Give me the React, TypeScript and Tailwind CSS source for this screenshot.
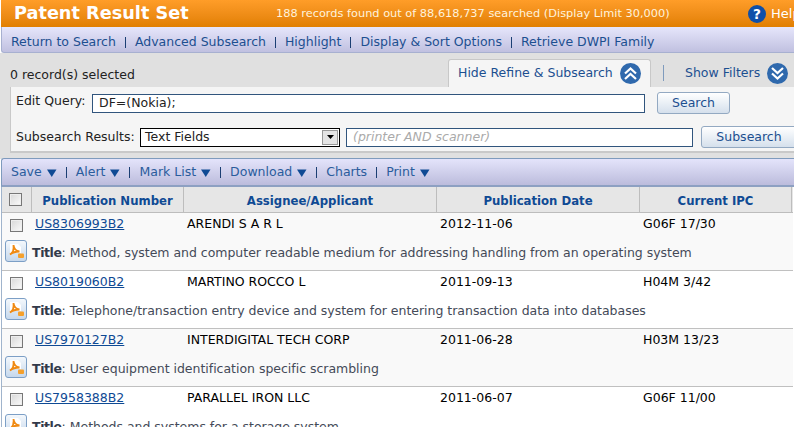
const font = "[font-family:'DejaVu_Sans',Verdana,sans-serif]";

const records = [
  { num: 'US8306993B2', who: 'ARENDI S A R L', date: '2012-11-06', ipc: 'G06F 17/30', title: 'Method, system and computer readable medium for addressing handling from an operating system', bg: 'bg-[#f9f9f9]' },
  { num: 'US8019060B2', who: 'MARTINO ROCCO L', date: '2011-09-13', ipc: 'H04M 3/42', title: 'Telephone/transaction entry device and system for entering transaction data into databases', bg: 'bg-white' },
  { num: 'US7970127B2', who: 'INTERDIGITAL TECH CORP', date: '2011-06-28', ipc: 'H03M 13/23', title: 'User equipment identification specific scrambling', bg: 'bg-[#f9f9f9]' },
  { num: 'US7958388B2', who: 'PARALLEL IRON LLC', date: '2011-06-07', ipc: 'G06F 11/00', title: 'Methods and systems for a storage system', bg: 'bg-white' },
];

function NavSep() {
  return <span className="mx-[9px] inline-block h-[11px] w-px bg-[#1b3f73]" />;
}

function Caret() {
  return (
    <svg width="10" height="8" viewBox="0 0 10 8" className="ml-[5px] inline-block">
      <path d="M0 0.5h9.5L4.75 8z" fill="#0f4a94" />
    </svg>
  );
}

function Check() {
  return <span className="block h-[13px] w-[13px] border border-[#777] bg-gradient-to-br from-[#d8d8d8] to-[#fbfbfb] shadow-[inset_0_0_0_1px_#eee]" />;
}

function Chevrons({ up }: { up?: boolean }) {
  return (
    <svg width="21" height="21" viewBox="0 0 21 21" className="ml-[7px] shrink-0">
      <circle cx="10.5" cy="10.5" r="10.5" fill="#2f69ad" />
      <g fill="none" stroke="#fff" strokeWidth="2.2" transform={up ? undefined : 'rotate(180 10.5 10.5)'}>
        <path d="M5 10.5l5.5-5 5.5 5" />
        <path d="M5 16l5.5-5 5.5 5" />
      </g>
    </svg>
  );
}

function PdfIcon() {
  return (
    <span className="flex h-[22px] w-[22px] shrink-0 items-center justify-center rounded-[3px] border border-[#7c9fc6] bg-gradient-to-b from-[#f4f8fc] to-[#c6d8ec]">
      <svg width="16" height="16" viewBox="0 0 16 16">
        <path d="M2 1h8l3 3v6H2z" fill="#fff" />
        <path d="M2 11.500c3-1.500 4-5 3.500-9.500 .5 4 2.500 6 6 6.500-3 0-6.500 .500-9.500 3z" fill="none" stroke="#f08a12" strokeWidth="1.800" />
        <rect x="10" y="10.500" width="6" height="4.500" rx="1" fill="#f5a02c" />
      </svg>
    </span>
  );
}

function ColHead({ label, className }: { label: string; className: string }) {
  return (
    <div className={`flex items-center justify-center border-r border-[#bdbdbd] pt-[5px] font-bold text-[#0f4a94] ${className}`}>
      {label}
    </div>
  );
}

export default function App() {
  return (
    <div className={`h-[427px] w-[794px] overflow-hidden bg-white text-[12.5px] leading-none ${font}`}>
      <header className="ml-px flex h-[27px] w-[820px] items-center bg-gradient-to-b from-[#ff9d28] to-[#e17f00] text-white">
        <h1 className="ml-[13px] w-[262px] text-[17.7px] font-bold">Patent Result Set</h1>
        <span className="w-[472px] text-[11.35px] text-[#fff3dd]">188 records found out of 88,618,737 searched (Display Limit 30,000)</span>
        <svg width="18" height="18" viewBox="0 0 17 17" className="shrink-0">
          <circle cx="8.5" cy="8.5" r="8.5" fill="#0f4fa8" />
          <text x="8.5" y="13" textAnchor="middle" fontSize="13" fontWeight="bold" fill="#fff" fontFamily="DejaVu Sans">?</text>
        </svg>
        <span className="ml-[5px] text-[13px]">Help</span>
      </header>

      <nav className="ml-px flex h-[26px] w-[820px] items-center rounded-bl-[3px] border-b border-l border-[#a7b0d0] bg-gradient-to-b from-[#e6e6fb] to-[#c0c0e0] pl-[9px] pt-[5px] text-[#1c4f90]">
        <span>Return to Search</span><NavSep />
        <span>Advanced Subsearch</span><NavSep />
        <span>Highlight</span><NavSep />
        <span>Display &amp; Sort Options</span><NavSep />
        <span>Retrieve DWPI Family</span>
      </nav>

      <div className="h-[106px] bg-[#e0e0e0] pt-[6px]">
        <div className="flex h-[28px] items-center pl-[10px] text-[#222]">
          <span className="w-[438px] pt-[4px]">0 record(s) selected</span>
          <div className="flex h-[28px] w-[203px] items-center rounded-t-[3px] border border-b-0 border-[#c8c8c8] bg-[#f5f5f5] pl-[9px] text-[#1c4f90]">
            Hide Refine &amp; Subsearch
            <Chevrons up />
          </div>
          <span className="ml-[12px] h-[16px] w-px bg-[#7f9bbd]" />
          <span className="ml-[21px] text-[#1c4f90]">Show Filters</span>
          <Chevrons />
        </div>
        <div className="ml-[10px] h-[66px] w-[800px] border-b-2 border-l border-[#c9c9c9] bg-[#f5f5f5]">
          <div className="flex items-center pt-[5px] text-[#222]">
            <span className="w-[81px] pb-[3px] pl-[5px]">Edit Query:</span>
            <span className="flex h-[19px] w-[553px] items-center border border-[#31557d] bg-white pl-[6px] text-[#222]">DF=(Nokia);</span>
            <span className="ml-[12px] flex h-[22px] w-[73px] items-center justify-center rounded-[3px] border border-[#93a9c2] bg-gradient-to-b from-white to-[#d5e0ec] text-[#1c4f90]">Search</span>
          </div>
          <div className="mt-[12px] flex items-center text-[#222]">
            <span className="w-[129px] pl-[5px]">Subsearch Results:</span>
            <span className="flex h-[19px] w-[200px] items-center justify-between border border-black bg-white pl-[4px] pr-[1px]">
              Text Fields
              <span className="flex h-[15px] w-[16px] items-center justify-center border border-[#999] bg-[#e4e4e4]">
                <svg width="7" height="4" viewBox="0 0 7 4"><path d="M0 0h7L3.500 4z" fill="#000" /></svg>
              </span>
            </span>
            <span className="ml-[6px] flex h-[19px] w-[347px] items-center border border-[#31557d] bg-white pl-[6px] italic text-[#aaa]">(printer AND scanner)</span>
            <span className="ml-[8px] flex h-[22px] w-[96px] items-center justify-center rounded-[3px] border border-[#93a9c2] bg-gradient-to-b from-white to-[#d5e0ec] text-[#1c4f90]">Subsearch</span>
          </div>
        </div>
      </div>

      <div className="ml-px mt-[-1px] flex h-[29px] w-[820px] items-center rounded-tl-[3px] border-t border-l border-b-2 border-t-[#7f9bbd] border-l-[#7f9bbd] border-b-[#8da0c2] bg-gradient-to-b from-[#e4e4fb] to-[#bcbcdc] pl-[9px] pt-[1px] text-[#2a5c9c]">
        <span>Save</span><Caret /><NavSep />
        <span>Alert</span><Caret /><NavSep />
        <span>Mark List</span><Caret /><NavSep />
        <span>Download</span><Caret /><NavSep />
        <span>Charts</span><NavSep />
        <span>Print</span><Caret />
      </div>

      <div className="ml-px w-[792px] border-l border-[#a0b4cc]">
        <div className="flex h-[26px] border-b border-[#bdbdbd] bg-[#e6e6e6] text-[11.7px]">
          <div className="flex w-[30px] items-center justify-center border-r border-[#bdbdbd] pr-[2px]"><Check /></div>
          <ColHead label="Publication Number" className="w-[152px]" />
          <ColHead label="Assignee/Applicant" className="w-[253px]" />
          <ColHead label="Publication Date" className="w-[203px]" />
          <ColHead label="Current IPC" className="w-[152px]" />
        </div>
        {records.map((r) => (
          <div key={r.num} className={`h-[58px] border-b border-[#c0c0c0] ${r.bg}`}>
            <div className="flex h-[27px] items-start pt-[5px] text-black">
              <div className="flex w-[30px] justify-center pr-[2px] pt-px"><Check /></div>
              <span className="w-[152px] pl-[3px] text-[#0f4a94] underline">{r.num}</span>
              <span className="w-[253px] pl-[3px]">{r.who}</span>
              <span className="w-[203px] pl-[3px]">{r.date}</span>
              <span className="pl-[3px]">{r.ipc}</span>
            </div>
            <div className="flex items-start pl-[3px] tracking-[-0.02px] text-[#444a58]">
              <PdfIcon />
              <span className="ml-[5px] pt-[7px]"><b className="tracking-[-0.4px] text-[#333a4a]">Title</b>: {r.title}</span>
            </div>
          </div>
        ))}
      </div>
    </div>
  );
}
